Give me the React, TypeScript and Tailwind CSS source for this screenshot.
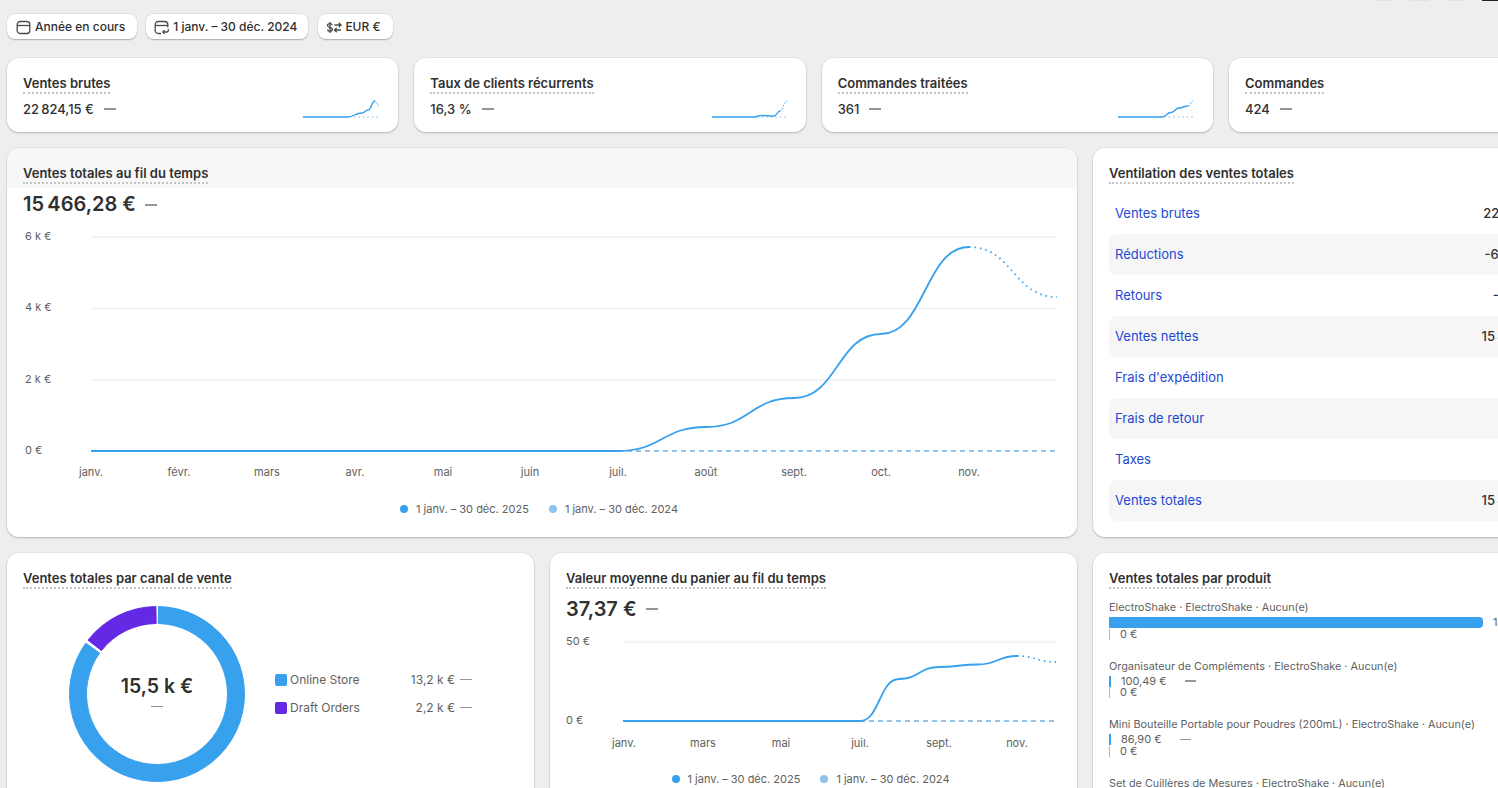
type Pt = [number, number];

// espace fine entre les milliers, comme dans la page
const NN = '\u202f';
const NB = '\u00a0';
const money = (whole: string, rest: string) => `${whole}${NN}${rest}${NB}€`;

// same curve as the charts: horizontal tangent on every month
function bump(pts: Pt[]) {
  let d = `M${pts[0][0]} ${pts[0][1]}`;
  for (let i = 0; i < pts.length - 1; i++) {
    const [x0, y0] = pts[i];
    const [x1, y1] = pts[i + 1];
    const mid = (x0 + x1) / 2;
    d += ` C${mid} ${y0} ${mid} ${y1} ${x1} ${y1}`;
  }
  return d;
}

// points are relative to each svg box
const shift = (pts: Pt[], x: number, y: number): Pt[] => pts.map(([a, b]) => [a - x, b - y]);

function Dash({ className = 'w-3' }: { className?: string }) {
  return <span className={`inline-block h-[1.5px] bg-[#959595] ${className}`} />;
}

function Title({ children }: { children: string }) {
  return (
    <div className="flex">
      <span className="border-b-2 border-dotted border-[#c4c4c4] text-[13px] leading-[17px] font-semibold text-[#303030]">
        {children}
      </span>
    </div>
  );
}

function Card({ className = '', children }: { className?: string; children: React.ReactNode }) {
  return (
    <div className={`rounded-xl bg-white shadow-[0_1px_2px_rgba(0,0,0,0.22),0_0_0_1px_rgba(0,0,0,0.03)] overflow-hidden ${className}`}>
      {children}
    </div>
  );
}

function FilterButton({ icon, label, className }: { icon: React.ReactNode; label: string; className: string }) {
  return (
    <div className={`h-[26px] flex items-center rounded-lg bg-white text-xs font-medium text-[#303030] shadow-[inset_0_-1px_0_#b5b5b5,0_0_0_1px_rgba(0,0,0,0.06)] ${className}`}>
      {icon}
      <span>{label}</span>
    </div>
  );
}

function CalendarIcon() {
  return (
    <svg width="15" height="15" viewBox="0 0 15 15" fill="none" stroke="#4a4a4a" strokeWidth="1.3">
      <rect x="1.2" y="1.5" width="12.6" height="12" rx="3" />
      <path d="M1.2 5.5H13.8" />
    </svg>
  );
}

function CalendarCompareIcon() {
  return (
    <svg width="15" height="15" viewBox="0 0 15 15" fill="none" stroke="#4a4a4a" strokeWidth="1.3">
      <path d="M7 13.5H4.2a3 3 0 0 1-3-3v-6a3 3 0 0 1 3-3h6.6a3 3 0 0 1 3 3v3" />
      <path d="M1.2 5.5H13.8" />
      <path d="M14.3 9v1.6a1.4 1.4 0 0 1-1.4 1.4H9" />
      <path d="M10.6 10.2 8.8 12l1.8 1.8" />
    </svg>
  );
}

function CurrencyIcon() {
  return (
    <svg width="16" height="15" viewBox="0 0 16 15" fill="none" stroke="#4a4a4a" strokeWidth="1.3">
      <path d="M6.2 5.2C6 4 5 3.6 3.9 3.6 2.6 3.6 1.5 4.2 1.5 5.4c0 2.6 4.9 1.4 4.9 4 0 1.2-1.1 1.8-2.4 1.8-1.2 0-2.2-.5-2.5-1.7" />
      <path d="M4 2v11" />
      <path d="M8.5 5h6.5M12.8 2.8 15 5l-2.2 2.2" />
      <path d="M15 10H8.5M10.7 7.8 8.5 10l2.2 2.2" />
    </svg>
  );
}

function StatCard({ title, value, spark }: { title: string; value: string; spark?: { cur: Pt[]; next: Pt[] } }) {
  return (
    <Card className="w-[391.33px] h-[74px] shrink-0 px-4 pt-[17px] relative">
      <Title>{title}</Title>
      <div className="mt-[5px] flex items-center gap-[10px] text-[13px] leading-5 font-medium text-[#303030]">
        <span>{value}</span>
        <Dash />
      </div>
      {spark && (
        <svg className="absolute right-[15px] top-[40px] w-[80px] h-[22px]" viewBox="0 0 80 22" fill="none">
          <path d="M1 19H76" stroke="#bcdcf5" strokeWidth="1.3" strokeDasharray="2 2.5" />
          <path d={bump(spark.cur)} stroke="#38a1ee" strokeWidth="1.4" />
          <path d={bump(spark.next)} stroke="#38a1ee" strokeWidth="1" strokeDasharray="1.5 1.5" />
        </svg>
      )}
    </Card>
  );
}

function LegendDots({ className = '' }: { className?: string }) {
  return (
    <div className={`flex items-center justify-center gap-5 pr-[6px] text-[11px] leading-4 text-[#616161] ${className}`}>
      <div className="flex items-center gap-2">
        <span className="w-2 h-2 rounded-full bg-[#38a1ee]" />
        <span>1 janv. – 30 déc. 2025</span>
      </div>
      <div className="flex items-center gap-2">
        <span className="w-2 h-2 rounded-full bg-[#8fc3e9]" />
        <span>1 janv. – 30 déc. 2024</span>
      </div>
    </div>
  );
}

const mainCurve: Pt[] = [[91, 451], [618, 451], [706, 427], [794, 398], [881, 334], [969, 247]];
const mainDotted: Pt[] = [[969, 247], [1057, 297]];

function MainChart() {
  const months: [string, number][] = [
    ['janv.', 91], ['févr.', 179], ['mars', 267], ['avr.', 355], ['mai', 443], ['juin', 530],
    ['juil.', 618], ['août', 706], ['sept.', 794], ['oct.', 881], ['nov.', 969],
  ];
  const ticks: [string, number][] = [['6 k €', 236], ['4 k €', 307], ['2 k €', 379], ['0 €', 450]];
  const ox = 7;
  const oy = 226;
  return (
    <svg className="block w-[1070px] h-[258px]" viewBox="0 0 1070 258" fill="none">
      {[237, 308.5, 380].map((y) => (
        <path key={y} d={`M84 ${y - oy}H1050`} stroke="#f1f1f1" strokeWidth="1.3" />
      ))}
      {ticks.map(([t, y]) => (
        <text key={t} x="18" y={y - oy + 4} fontSize="11" fill="#616161">{t}</text>
      ))}
      <path d={`M${618 - ox} ${451 - oy}H1050`} stroke="#8fc3e9" strokeWidth="2" strokeDasharray="5 4" />
      <path d={bump(shift(mainCurve, ox, oy))} stroke="#38a1ee" strokeWidth="1.8" />
      <path d={bump(shift(mainDotted, ox, oy))} stroke="#38a1ee" strokeWidth="1.8" strokeDasharray="1.5 4" />
      {months.map(([m, x]) => (
        <text key={m} x={x - ox} y={472 - oy + 4} fontSize="11" fill="#616161" textAnchor="middle">{m}</text>
      ))}
    </svg>
  );
}

const basketCurve: Pt[] = [[623, 721], [860, 721], [899, 679], [939, 667], [978, 664.5], [1017, 656]];
const basketDotted: Pt[] = [[1017, 656], [1056, 662]];

function BasketChart() {
  const months: [string, number][] = [['janv.', 624], ['mars', 703], ['mai', 781], ['juil.', 860], ['sept.', 939], ['nov.', 1017]];
  const ox = 550;
  const oy = 630;
  return (
    <svg className="block w-[527px] h-[122px] mt-px" viewBox="0 0 527 122" fill="none">
      <path d={`M${623 - ox} ${642 - oy}H${1057 - ox}`} stroke="#f1f1f1" strokeWidth="1.3" />
      <text x="16" y={641 - oy + 4} fontSize="11" fill="#616161">50 €</text>
      <text x="16" y={720 - oy + 4} fontSize="11" fill="#616161">0 €</text>
      <path d={`M${860 - ox} ${721 - oy}H${1057 - ox}`} stroke="#8fc3e9" strokeWidth="2" strokeDasharray="5 4" />
      <path d={bump(shift(basketCurve, ox, oy))} stroke="#38a1ee" strokeWidth="1.8" />
      <path d={bump(shift(basketDotted, ox, oy))} stroke="#38a1ee" strokeWidth="1.8" strokeDasharray="1.5 4" />
      {months.map(([m, x]) => (
        <text key={m} x={x - ox} y={743 - oy + 4} fontSize="11" fill="#616161" textAnchor="middle">{m}</text>
      ))}
    </svg>
  );
}

function polar(r: number, deg: number): Pt {
  const a = ((deg - 90) * Math.PI) / 180;
  return [88 + r * Math.cos(a), 88 + r * Math.sin(a)];
}

function arc(from: number, to: number) {
  const [ax, ay] = polar(87.5, from);
  const [bx, by] = polar(87.5, to);
  const [cx, cy] = polar(70.5, to);
  const [dx, dy] = polar(70.5, from);
  const large = to - from > 180 ? 1 : 0;
  return `M${ax} ${ay}A87.5 87.5 0 ${large} 1 ${bx} ${by}L${cx} ${cy}A70.5 70.5 0 ${large} 0 ${dx} ${dy}Z`;
}

function Donut() {
  return (
    <div className="relative w-[176px] h-[176px]">
      <svg className="block" width="176" height="176" viewBox="0 0 176 176">
        <path d={arc(1, 305.5)} fill="#38a1ee" stroke="#38a1ee" strokeWidth="1" strokeLinejoin="round" />
        <path d={arc(308, 359.3)} fill="#6329e4" stroke="#6329e4" strokeWidth="1" strokeLinejoin="round" />
      </svg>
      <div className="absolute inset-0 flex flex-col items-center justify-center pb-[7px]">
        <span className="text-[19.5px] leading-6 font-semibold text-[#303030]">15,5 k €</span>
        <Dash className="w-3 mt-2" />
      </div>
    </div>
  );
}

function ChannelRow({ color, name, value }: { color: string; name: string; value: string }) {
  return (
    <div className="flex items-center h-4 text-xs text-[#616161]">
      <span className={`w-3 h-3 rounded-[2px] ${color}`} />
      <span className="ml-[3px] w-[100px]">{name}</span>
      <span className="w-[65px] text-right">{value}</span>
      <Dash className="w-3 ml-[5px]" />
    </div>
  );
}

function BreakdownRow({ label, value, striped }: { label: string; value: string; striped?: boolean }) {
  return (
    <div className={`h-[41px] flex items-center justify-between pl-[6px] pr-[50px] rounded-lg ${striped ? 'bg-[#f6f6f6]' : ''}`}>
      <span className="text-[13px] text-[#2248d4]">{label}</span>
      <span className="text-[13px] font-medium text-[#303030]">{value}</span>
    </div>
  );
}

function ProductRow({ name, value, wide }: { name: string; value: string; wide?: boolean }) {
  return (
    <div className="h-[58.5px]">
      <div className="text-[10.85px] leading-[14px] text-[#616161] whitespace-nowrap">{name}</div>
      <div className="mt-[3px] flex items-center h-[11px] text-[11px] text-[#616161]">
        <span className={wide ? 'w-[374px] h-[11px] rounded-r-sm bg-[#38a1ee]' : 'w-[2px] h-[11px] bg-[#38a1ee]'} />
        <span className="ml-[10px] whitespace-nowrap">{value}</span>
        {!wide && <Dash className="w-[11px] ml-[18px]" />}
      </div>
      <div className="flex items-center h-[12px] text-[11px] text-[#616161]">
        <span className="w-px h-[11px] bg-[#8fc3e9]" />
        <span className="ml-[10px]">0 €</span>
      </div>
    </div>
  );
}

export default function App() {
  return (
    <div
      className="w-[1498px] h-[788px] overflow-hidden bg-[#eeeeee] relative"
      style={{ fontFamily: 'Inter, "Noto Sans", sans-serif' }}
    >
      {/* boutons du haut coupés par le bord */}
      <div className="absolute top-0 right-0 flex gap-[17px]">
        <span className="w-[19px] h-px bg-[#e2e2e2]" />
        <span className="w-[19px] h-px bg-[#e2e2e2]" />
        <span className="w-[19px] h-px bg-[#e2e2e2]" />
        <span className="w-[16px] h-px bg-[#222]" />
      </div>

      <div className="w-[1620px] pl-[7px] pt-[14px]">
        {/* filtres */}
        <div className="flex gap-[9px]">
          <FilterButton className="gap-1 pl-[9px] pr-3" icon={<CalendarIcon />} label="Année en cours" />
          <FilterButton className="gap-1 pl-2 pr-[11px]" icon={<CalendarCompareIcon />} label="1 janv. – 30 déc. 2024" />
          <FilterButton className="gap-[3px] pl-2 pr-3 ml-px" icon={<CurrencyIcon />} label="EUR €" />
        </div>

        {/* métriques */}
        <div className="mt-[18px] flex gap-4">
          <StatCard
            title="Ventes brutes"
            value={money('22', '824,15')}
            spark={{
              cur: [[0, 19], [44, 19], [59, 15], [65, 12], [72, 3]],
              next: [[72, 3], [76, 8]],
            }}
          />
          <StatCard
            title="Taux de clients récurrents"
            value="16,3 %"
            spark={{
              cur: [[1, 19], [43, 19], [50, 17.5], [63, 18], [69, 13]],
              next: [[69, 13], [76, 3]],
            }}
          />
          <StatCard
            title="Commandes traitées"
            value="361"
            spark={{
              cur: [[0, 19], [44, 19], [53, 14.5], [61, 10], [70, 8]],
              next: [[70, 8], [76, 2]],
            }}
          />
          <StatCard title="Commandes" value="424" />
        </div>

        {/* graphique + ventilation */}
        <div className="mt-4 flex gap-4">
          <Card className="w-[1070px] h-[389px]">
            <div className="h-[40px] px-4 pt-[17px] bg-[#f7f7f7]">
              <Title>Ventes totales au fil du temps</Title>
            </div>
            <div className="px-4 h-[38px] flex items-start gap-[9px] text-xl leading-[32px] font-semibold text-[#303030]">
              <span>{money('15', '466,28')}</span>
              <Dash className="w-3 mt-4" />
            </div>
            <MainChart />
            <LegendDots className="mt-[17px]" />
          </Card>

          <Card className="w-[527px] h-[389px] px-4 pt-[17px]">
            <Title>Ventilation des ventes totales</Title>
            <div className="mt-[9px]">
              <BreakdownRow label="Ventes brutes" value={money('22', '824,15')} />
              <BreakdownRow label="Réductions" value={money('-6', '910,37')} striped />
              <BreakdownRow label="Retours" value={`-447,50${NB}€`} />
              <BreakdownRow label="Ventes nettes" value={money('15', '466,28')} striped />
              <BreakdownRow label="Frais d'expédition" value="0 €" />
              <BreakdownRow label="Frais de retour" value="0 €" striped />
              <BreakdownRow label="Taxes" value="0 €" />
              <BreakdownRow label="Ventes totales" value={money('15', '466,28')} striped />
            </div>
          </Card>
        </div>

        {/* dernière rangée */}
        <div className="mt-4 flex gap-4">
          <Card className="w-[527px] h-[260px] px-4 pt-[17px]">
            <Title>Ventes totales par canal de vente</Title>
            <div className="mt-[17px] flex items-center">
              <div className="ml-[46px]">
                <Donut />
              </div>
              <div className="ml-[30px] flex flex-col gap-3 mb-px">
                <ChannelRow color="bg-[#38a1ee]" name="Online Store" value="13,2 k €" />
                <ChannelRow color="bg-[#6329e4]" name="Draft Orders" value="2,2 k €" />
              </div>
            </div>
          </Card>

          <Card className="w-[527px] h-[260px]">
            <div className="px-4 pt-[17px]">
              <Title>Valeur moyenne du panier au fil du temps</Title>
              <div className="h-[40px] flex items-center gap-[9px] text-xl font-semibold text-[#303030]">
                <span>37,37 €</span>
                <Dash />
              </div>
            </div>
            <BasketChart />
            <LegendDots className="mt-[19px]" />
          </Card>

          <Card className="w-[527px] h-[260px] px-4 pt-[17px]">
            <Title>Ventes totales par produit</Title>
            <div className="mt-[11px]">
              <ProductRow name="ElectroShake · ElectroShake · Aucun(e)" value={money('14', '280,00')} wide />
              <ProductRow name="Organisateur de Compléments · ElectroShake · Aucun(e)" value="100,49 €" />
              <ProductRow name="Mini Bouteille Portable pour Poudres (200mL) · ElectroShake · Aucun(e)" value="86,90 €" />
              <ProductRow name="Set de Cuillères de Mesures · ElectroShake · Aucun(e)" value="52,00 €" />
            </div>
          </Card>
        </div>
      </div>
    </div>
  );
}
